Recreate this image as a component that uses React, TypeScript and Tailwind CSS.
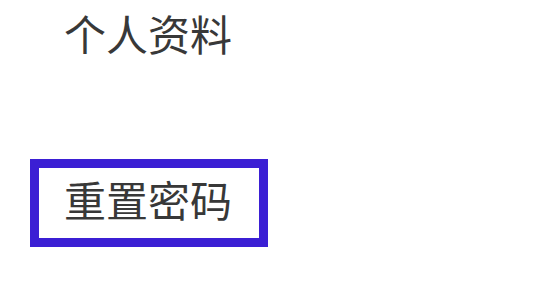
export default function App() {
  return (
    <div className="w-[553px] h-[290px] bg-white overflow-hidden" style={{ fontFamily: '"Noto Sans CJK SC", "Noto Sans", sans-serif' }}>
      <div className="pl-[64px] pt-[8px] text-[42px] leading-[50px] text-[#383838]">个人资料</div>
      <div className="ml-[30px] mt-[101px] w-[238px] h-[88px] border-[9px] border-[#3b1fd4] pt-[6px] pl-[25px] text-[42px] leading-[50px] text-[#383838]">
        重置密码
      </div>
    </div>
  );
}
